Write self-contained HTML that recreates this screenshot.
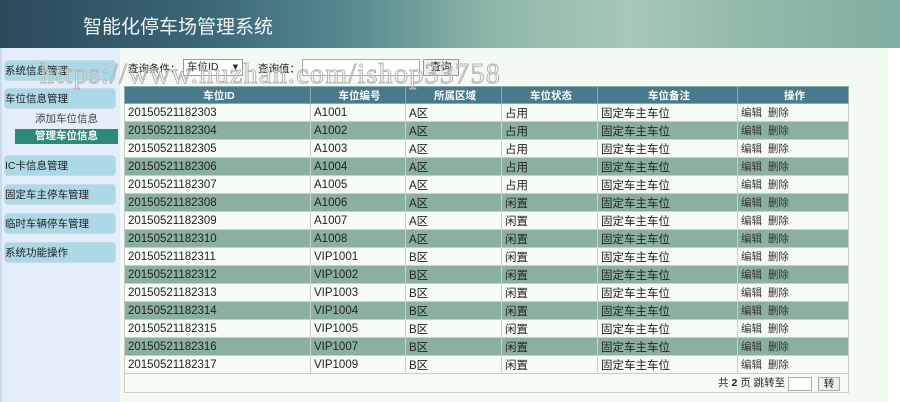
<!DOCTYPE html>
<html><head><meta charset="utf-8"><style>
*{margin:0;padding:0;box-sizing:border-box}
body{width:900px;height:402px;overflow:hidden;background:#fff;font-family:"Liberation Sans","Noto Sans CJK SC",sans-serif;font-size:11px;color:#222;position:relative}
#hd{position:absolute;left:0;top:0;width:900px;height:48px;background:linear-gradient(90deg,#2a4a5a 0%,#3a6576 22%,#5a8c90 40%,#8fb8aa 55%,#a7c9b6 70%,#93bba9 82%,#80ada2 100%)}
#hd h1{position:absolute;left:83px;top:12px;font-size:19px;font-weight:normal;color:#f2f6f6}
#sb{position:absolute;left:0;top:48px;width:120px;height:354px;background:#e3eefa;border-left:2px solid #c8dcf0}
.m{position:absolute;left:4px;width:112px;height:21px;background:#add8e6;border-radius:4px;border:1px solid #c5dde8;font-size:10.5px;line-height:20px;color:#222}
.s{position:absolute;left:15px;width:103px;height:15px;text-align:center;font-size:10.5px;line-height:15px;color:#444}
#ct{position:absolute;left:120px;top:48px;width:768px;height:354px;background:#f3faf2}
.q{position:absolute;top:61px;font-size:10.5px;color:#222}
.sel{position:absolute;left:183px;top:59px;width:60px;height:17px;border:1px solid #999;background:#fff;font-size:10.5px;line-height:15px;padding-left:3px}
.inp{position:absolute;left:302px;top:59px;width:118px;height:17px;border:1px solid #aaa;background:#fff}
.btn{position:absolute;left:423px;top:59px;width:36px;height:17px;border:1px solid #999;background:#eee;font-size:10.5px;line-height:15px;text-align:center}
table{position:absolute;left:124px;top:86px;width:725px;border-collapse:collapse;border:1px solid #aaa}
td,th{height:18px;padding:0 0 0 3px;border:1px solid #ccc;font-size:11.5px;text-align:left;white-space:nowrap}
th{height:17px;background:#467a8c;color:#fff;font-size:10.5px;text-align:center;border-color:#8aa}
tr.a td{background:#8cb0a0}
tr.b td{background:#f6fbf3}
td.op{font-size:10.5px;color:#333}
tr.p td{background:#f6fbf3;text-align:right;font-size:10.5px;height:19px;padding-right:8px}
.wm{position:absolute;left:40px;top:59px;font-family:"Liberation Serif",serif;font-size:28px;color:rgba(255,255,255,0.3);-webkit-text-stroke:1px #b5b5b5;letter-spacing:1.3px;white-space:nowrap}
</style></head><body>
<div id="hd"><h1>智能化停车场管理系统</h1></div>
<div id="sb"></div>
<div class="m" style="top:60px">系统信息管理</div>
<div class="m" style="top:88px">车位信息管理</div>
<div class="s" style="top:112px">添加车位信息</div>
<div class="s" style="top:129px;background:#2e8a78;color:#fff;font-weight:bold">管理车位信息</div>
<div class="m" style="top:155px">IC卡信息管理</div>
<div class="m" style="top:184px">固定车主停车管理</div>
<div class="m" style="top:213px">临时车辆停车管理</div>
<div class="m" style="top:242px">系统功能操作</div>
<div id="ct"></div>
<div class="q" style="left:128px">查询条件：</div>
<div class="sel">车位ID <span style="float:right;padding-right:4px">▾</span></div>
<div class="q" style="left:258px">查询值：</div>
<div class="inp"></div>
<div class="btn">查询</div>
<table>
<tr><th style="width:186px">车位ID</th><th style="width:95px">车位编号</th><th style="width:96px">所属区域</th><th style="width:96px">车位状态</th><th style="width:140px">车位备注</th><th>操作</th></tr>
<tr class="b"><td>20150521182303</td><td>A1001</td><td>A区</td><td>占用</td><td>固定车主车位</td><td class="op">编辑&nbsp; 删除</td></tr>
<tr class="a"><td>20150521182304</td><td>A1002</td><td>A区</td><td>占用</td><td>固定车主车位</td><td class="op">编辑&nbsp; 删除</td></tr>
<tr class="b"><td>20150521182305</td><td>A1003</td><td>A区</td><td>占用</td><td>固定车主车位</td><td class="op">编辑&nbsp; 删除</td></tr>
<tr class="a"><td>20150521182306</td><td>A1004</td><td>A区</td><td>占用</td><td>固定车主车位</td><td class="op">编辑&nbsp; 删除</td></tr>
<tr class="b"><td>20150521182307</td><td>A1005</td><td>A区</td><td>占用</td><td>固定车主车位</td><td class="op">编辑&nbsp; 删除</td></tr>
<tr class="a"><td>20150521182308</td><td>A1006</td><td>A区</td><td>闲置</td><td>固定车主车位</td><td class="op">编辑&nbsp; 删除</td></tr>
<tr class="b"><td>20150521182309</td><td>A1007</td><td>A区</td><td>闲置</td><td>固定车主车位</td><td class="op">编辑&nbsp; 删除</td></tr>
<tr class="a"><td>20150521182310</td><td>A1008</td><td>A区</td><td>闲置</td><td>固定车主车位</td><td class="op">编辑&nbsp; 删除</td></tr>
<tr class="b"><td>20150521182311</td><td>VIP1001</td><td>B区</td><td>闲置</td><td>固定车主车位</td><td class="op">编辑&nbsp; 删除</td></tr>
<tr class="a"><td>20150521182312</td><td>VIP1002</td><td>B区</td><td>闲置</td><td>固定车主车位</td><td class="op">编辑&nbsp; 删除</td></tr>
<tr class="b"><td>20150521182313</td><td>VIP1003</td><td>B区</td><td>闲置</td><td>固定车主车位</td><td class="op">编辑&nbsp; 删除</td></tr>
<tr class="a"><td>20150521182314</td><td>VIP1004</td><td>B区</td><td>闲置</td><td>固定车主车位</td><td class="op">编辑&nbsp; 删除</td></tr>
<tr class="b"><td>20150521182315</td><td>VIP1005</td><td>B区</td><td>闲置</td><td>固定车主车位</td><td class="op">编辑&nbsp; 删除</td></tr>
<tr class="a"><td>20150521182316</td><td>VIP1007</td><td>B区</td><td>闲置</td><td>固定车主车位</td><td class="op">编辑&nbsp; 删除</td></tr>
<tr class="b"><td>20150521182317</td><td>VIP1009</td><td>B区</td><td>闲置</td><td>固定车主车位</td><td class="op">编辑&nbsp; 删除</td></tr>
<tr class="p"><td colspan="6">共 <b>2</b> 页 跳转至 <span style="display:inline-block;width:24px;height:14px;border:1px solid #aaa;background:#fff;vertical-align:middle"></span> <span style="display:inline-block;width:22px;height:14px;border:1px solid #aaa;background:#eee;text-align:center;line-height:12px;vertical-align:middle;margin-left:3px">转</span></td></tr>
</table>
<div class="wm">https://www.huzhan.com/ishop33758</div>
</body></html>
